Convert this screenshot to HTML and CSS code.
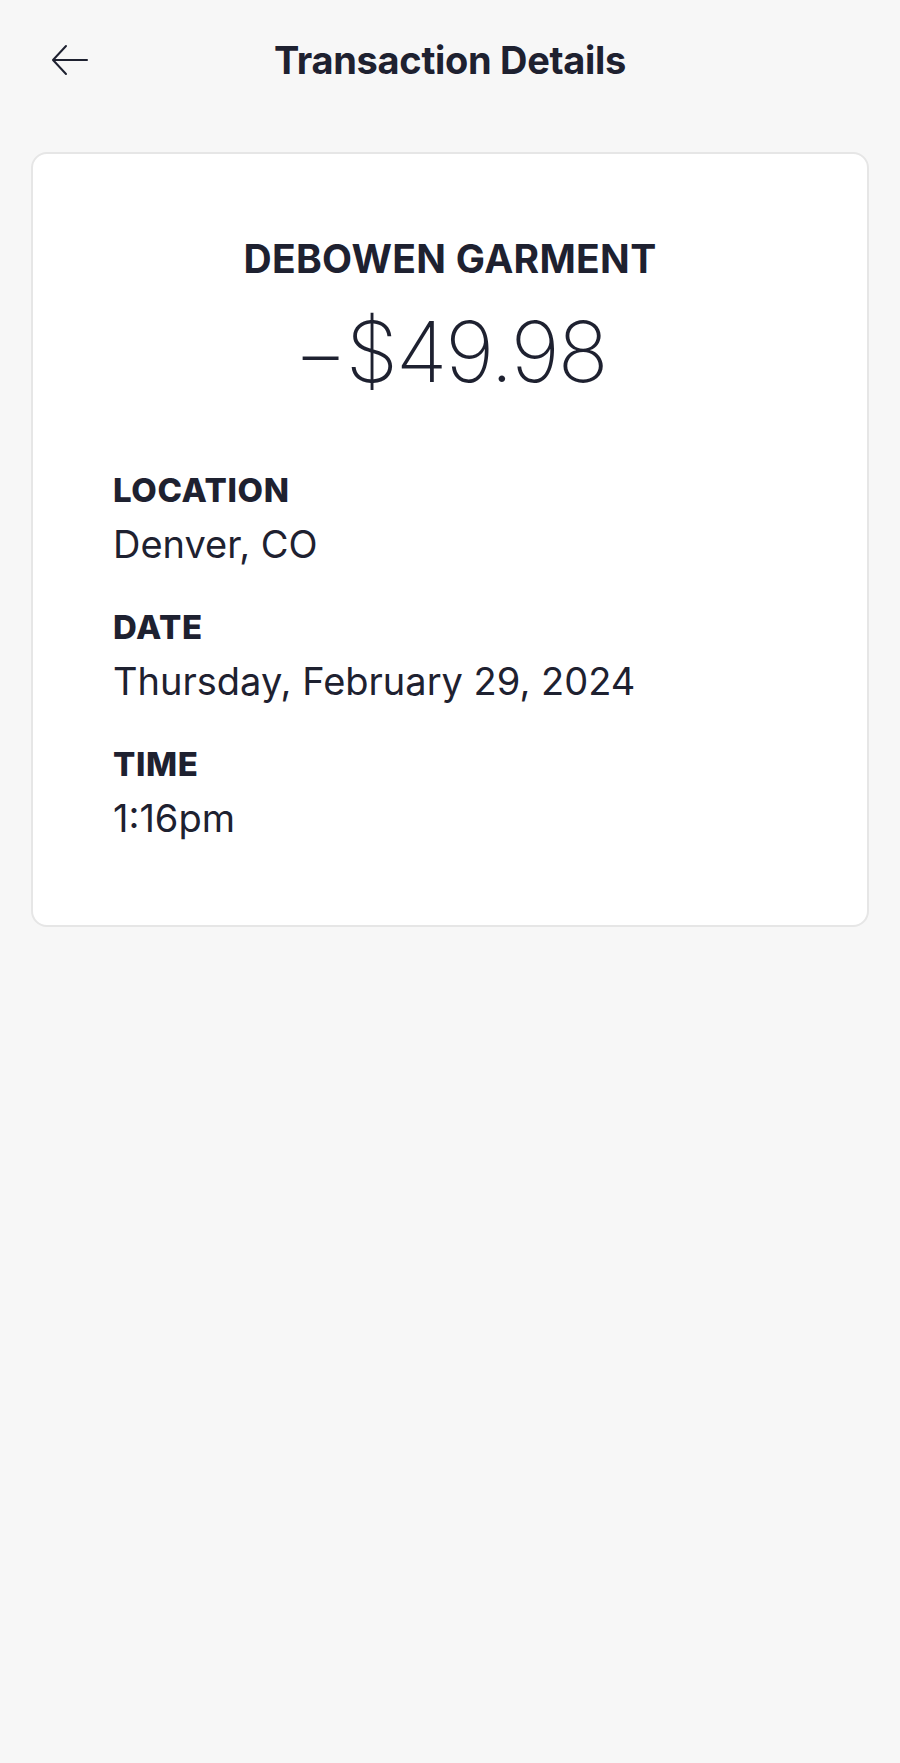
FILE: index.html
```html
<!DOCTYPE html>
<html lang="en">
<head>
    <meta charset="UTF-8">
    <meta name="viewport" content="width=device-width, initial-scale=1.0">
    <title>Transaction Details</title>
    <link rel="stylesheet" href="styles.css">
</head>
<body>
    <!-- Top bar -->
    <header class="top-bar">
        <button class="back-btn" aria-label="Back">
            <svg width="38" height="32" viewBox="0 0 38 32" fill="none" stroke="#1e2130" stroke-width="2" stroke-linecap="round" stroke-linejoin="round">
                <path d="M36 16H3"/>
                <path d="M15 2L2 16l13 14"/>
            </svg>
        </button>
        <h1>Transaction Details</h1>
    </header>

    <!-- Transaction card -->
    <div class="card">
        <div class="summary">
            <h2 class="merchant">DEBOWEN GARMENT</h2>
            <div class="amount">&minus;$49.98</div>
        </div>

        <dl class="details">
            <dt>LOCATION</dt>
            <dd>Denver, CO</dd>
            <dt>DATE</dt>
            <dd>Thursday, February 29, 2024</dd>
            <dt>TIME</dt>
            <dd>1:16pm</dd>
        </dl>
    </div>
</body>
</html>
```

FILE: styles.css
```css
body {
    font-family: 'Inter', 'Noto Sans', sans-serif;
    margin: 0;
    padding: 0;
    background: #f7f7f7;
    color: #1e2130;
    min-height: 100vh;
}

.top-bar {
    position: relative;
    height: 120px;
    display: flex;
    align-items: center;
    justify-content: center;
}

.back-btn {
    position: absolute;
    left: 51px;
    top: 44px;
    padding: 0;
    border: none;
    background: none;
    cursor: pointer;
    line-height: 0;
}

.top-bar h1 {
    margin: 0;
    font-size: 38px;
    font-weight: 700;
    letter-spacing: -0.3px;
}

.card {
    background: white;
    border: 2px solid #e6e6e6;
    border-radius: 16px;
    margin: 32px 31px 0;
    padding: 81px 80px 84px;
}

.summary {
    text-align: center;
}

.merchant {
    margin: 0;
    font-size: 39px;
    font-weight: 700;
    letter-spacing: 0.3px;
    line-height: 48px;
}

.amount {
    font-size: 84px;
    font-weight: 200;
    line-height: 100px;
    margin-top: 19px;
    letter-spacing: -2px;
}

.details {
    margin: 68px 0 0;
}

.details dt {
    font-size: 33px;
    font-weight: 800;
    line-height: 40px;
    letter-spacing: 0.6px;
}

.details dd {
    margin: 11px 0 40px;
    font-size: 38px;
    font-weight: 400;
    line-height: 46px;
}

.details dd:last-child {
    margin-bottom: 0;
}
```
